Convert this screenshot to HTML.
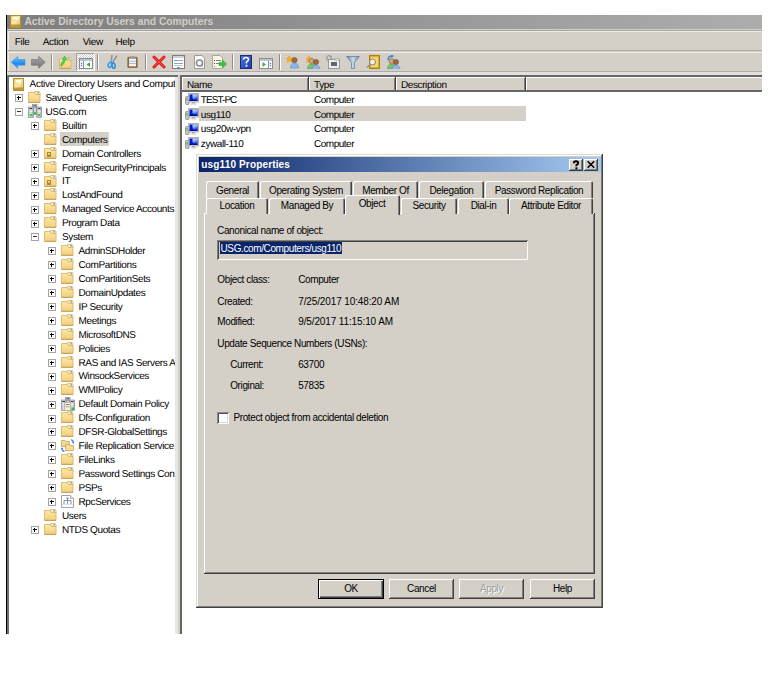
<!DOCTYPE html>
<html><head><meta charset="utf-8"><style>
html,body{margin:0;padding:0;}
body{width:771px;height:689px;position:relative;overflow:hidden;background:#fff;font-family:"Liberation Sans", sans-serif;}
</style></head><body>
<div style="position:absolute;left:6px;top:15px;width:1px;height:619px;background:#000"></div>
<div style="position:absolute;left:7px;top:15px;width:755px;height:14px;background:linear-gradient(to right,#7e7e7e,#adadad)"></div>
<svg style="position:absolute;left:10px;top:15px" width="11" height="13" viewBox="0 0 11 13"><defs><linearGradient id="ai" x1="0" y1="0" x2="1" y2="1"><stop offset="0" stop-color="#e8c860"/><stop offset="0.5" stop-color="#f8e8a8"/><stop offset="1" stop-color="#d8b050"/></linearGradient></defs><rect x="0.5" y="0.5" width="10" height="12" fill="url(#ai)" stroke="#b89030"/><rect x="2.5" y="2" width="5.5" height="2.5" fill="#fffce8"/><rect x="1" y="9.5" width="9" height="2.5" fill="#c09838"/></svg>
<div style="position:absolute;left:24.4px;top:16.68px;font-size:10.3px;line-height:10.3px;letter-spacing:0px;color:#d2cec6;font-weight:bold;white-space:nowrap;">Active Directory Users and Computers</div>
<div style="position:absolute;left:7px;top:29px;width:755px;height:605px;background:#d4d0c8"></div>
<div style="position:absolute;left:7px;top:30px;width:755px;height:1px;background:#a8a6a2"></div>
<div style="position:absolute;left:8px;top:31px;width:754px;height:1px;background:#eeece8"></div>
<div style="position:absolute;left:8px;top:31px;width:1px;height:19px;background:#eeece8"></div>
<div style="position:absolute;left:8px;top:50px;width:754px;height:1px;background:#aeaaa5"></div>
<div style="position:absolute;left:14.8px;top:37.73px;font-size:10px;line-height:10px;letter-spacing:-0.35px;color:#000;font-weight:normal;white-space:nowrap;text-rendering:geometricPrecision">File</div>
<div style="position:absolute;left:42.8px;top:37.73px;font-size:10px;line-height:10px;letter-spacing:-0.35px;color:#000;font-weight:normal;white-space:nowrap;text-rendering:geometricPrecision">Action</div>
<div style="position:absolute;left:82.7px;top:37.73px;font-size:10px;line-height:10px;letter-spacing:-0.35px;color:#000;font-weight:normal;white-space:nowrap;text-rendering:geometricPrecision">View</div>
<div style="position:absolute;left:115.5px;top:37.73px;font-size:10px;line-height:10px;letter-spacing:-0.35px;color:#000;font-weight:normal;white-space:nowrap;text-rendering:geometricPrecision">Help</div>
<div style="position:absolute;left:8px;top:52px;width:754px;height:1px;background:#eeece8"></div>
<div style="position:absolute;left:8px;top:52px;width:1px;height:19px;background:#eeece8"></div>
<div style="position:absolute;left:8px;top:71px;width:754px;height:1px;background:#aeaaa5"></div>
<div style="position:absolute;left:7px;top:72px;width:755px;height:3px;background:#e2e0dc"></div>
<div style="position:absolute;left:7px;top:75px;width:171px;height:559px;background:#6e6e6e"></div>
<div style="position:absolute;left:9px;top:77px;width:166px;height:557px;background:#fff"></div>
<div style="position:absolute;left:175px;top:77px;width:3px;height:557px;background:#e8e6e3"></div>
<div style="position:absolute;left:180px;top:75px;width:582px;height:559px;background:#666"></div>
<div style="position:absolute;left:182px;top:77px;width:580px;height:557px;background:#fff"></div>
<div style="position:absolute;left:182px;top:77px;width:127px;height:14px;background:#d4d0c8"></div>
<div style="position:absolute;left:182px;top:77px;width:127px;height:1px;background:#fff"></div>
<div style="position:absolute;left:182px;top:77px;width:1px;height:14px;background:#fff"></div>
<div style="position:absolute;left:307px;top:78px;width:1px;height:12px;background:#808080"></div>
<div style="position:absolute;left:308px;top:77px;width:1px;height:14px;background:#404040"></div>
<div style="position:absolute;left:182px;top:90px;width:127px;height:2px;background:#666"></div>
<div style="position:absolute;left:187px;top:81.13px;font-size:10px;line-height:10px;letter-spacing:-0.4px;color:#000;font-weight:normal;white-space:nowrap;text-rendering:geometricPrecision">Name</div>
<div style="position:absolute;left:309px;top:77px;width:87px;height:14px;background:#d4d0c8"></div>
<div style="position:absolute;left:309px;top:77px;width:87px;height:1px;background:#fff"></div>
<div style="position:absolute;left:309px;top:77px;width:1px;height:14px;background:#fff"></div>
<div style="position:absolute;left:394px;top:78px;width:1px;height:12px;background:#808080"></div>
<div style="position:absolute;left:395px;top:77px;width:1px;height:14px;background:#404040"></div>
<div style="position:absolute;left:309px;top:90px;width:87px;height:2px;background:#666"></div>
<div style="position:absolute;left:314px;top:81.13px;font-size:10px;line-height:10px;letter-spacing:-0.4px;color:#000;font-weight:normal;white-space:nowrap;text-rendering:geometricPrecision">Type</div>
<div style="position:absolute;left:396px;top:77px;width:130px;height:14px;background:#d4d0c8"></div>
<div style="position:absolute;left:396px;top:77px;width:130px;height:1px;background:#fff"></div>
<div style="position:absolute;left:396px;top:77px;width:1px;height:14px;background:#fff"></div>
<div style="position:absolute;left:524px;top:78px;width:1px;height:12px;background:#808080"></div>
<div style="position:absolute;left:525px;top:77px;width:1px;height:14px;background:#404040"></div>
<div style="position:absolute;left:396px;top:90px;width:130px;height:2px;background:#666"></div>
<div style="position:absolute;left:401px;top:81.13px;font-size:10px;line-height:10px;letter-spacing:-0.4px;color:#000;font-weight:normal;white-space:nowrap;text-rendering:geometricPrecision">Description</div>
<div style="position:absolute;left:526px;top:77px;width:236px;height:14px;background:#d4d0c8"></div>
<div style="position:absolute;left:526px;top:77px;width:236px;height:1px;background:#fff"></div>
<div style="position:absolute;left:526px;top:77px;width:1px;height:14px;background:#fff"></div>
<div style="position:absolute;left:526px;top:90px;width:236px;height:2px;background:#666"></div>
<div style="position:absolute;left:9px;top:77px;width:166px;height:557px;overflow:hidden">
<svg style="position:absolute;left:4px;top:1px" width="11" height="13" viewBox="0 0 11 13"><defs><linearGradient id="ri" x1="0" y1="0" x2="1" y2="1"><stop offset="0" stop-color="#e8c860"/><stop offset="0.5" stop-color="#f8e8a8"/><stop offset="1" stop-color="#d8b050"/></linearGradient></defs><rect x="0.5" y="0.5" width="10" height="12" fill="url(#ri)" stroke="#b89030"/><rect x="2.5" y="2" width="5.5" height="2.5" fill="#fffce8"/><rect x="1" y="9.5" width="9" height="2.5" fill="#c09838"/></svg>
<div style="position:absolute;left:20.6px;top:2.94px;font-size:10px;line-height:10px;letter-spacing:-0.31px;color:#000;font-weight:normal;white-space:nowrap;text-rendering:geometricPrecision">Active Directory Users and Comput</div>
<svg style="position:absolute;left:6px;top:17px" width="8" height="8" viewBox="0 0 8 8"><rect x="0.5" y="0.5" width="7" height="7" fill="#fff" stroke="#a4a4a4"/><rect x="2" y="3" width="4" height="1" fill="#333"/><rect x="3" y="2" width="1" height="4" fill="#000"/><rect x="2" y="3" width="4" height="1" fill="#000"/></svg>
<svg style="position:absolute;left:19px;top:14px" width="13" height="13" viewBox="0 0 13 13"><defs><linearGradient id="fg" x1="0" y1="0" x2="0" y2="1"><stop offset="0" stop-color="#fde9a4"/><stop offset="1" stop-color="#f1cd7e"/></linearGradient></defs><path d="M6.5 0.5 H11.3 L12 1.2 V4 H6.5 Z" fill="#fbefcc" stroke="#d8b46a" stroke-width="0.8"/><rect x="9.2" y="1.2" width="1.8" height="1.3" fill="#6aa0d0"/><path d="M0.5 1.5 H6.3 Q6.8 3.5 8 3.5 H12 V11.5 H0.5 Z" fill="url(#fg)" stroke="#dcb668" stroke-width="0.9"/><rect x="0.5" y="10.8" width="11.5" height="0.9" fill="#c39a4a"/></svg>
<div style="position:absolute;left:36.5px;top:16.87px;font-size:10px;line-height:10px;letter-spacing:-0.38px;color:#000;font-weight:normal;white-space:nowrap;text-rendering:geometricPrecision">Saved Queries</div>
<svg style="position:absolute;left:6px;top:31px" width="8" height="8" viewBox="0 0 8 8"><rect x="0.5" y="0.5" width="7" height="7" fill="#fff" stroke="#a4a4a4"/><rect x="2" y="3" width="4" height="1" fill="#333"/></svg>
<svg style="position:absolute;left:19px;top:27px" width="14" height="14" viewBox="0 0 14 14"><defs><linearGradient id="sv" x1="0" y1="0" x2="1" y2="0"><stop offset="0" stop-color="#a8b0b8"/><stop offset="0.5" stop-color="#e4e8ec"/><stop offset="1" stop-color="#9aa2aa"/></linearGradient></defs><rect x="4.5" y="0.5" width="4.5" height="3.5" fill="url(#sv)" stroke="#8a9098" stroke-width="0.7"/><rect x="5.5" y="1.3" width="2.5" height="1" fill="#303840"/><rect x="5" y="3.5" width="4" height="7" fill="url(#sv)" stroke="#8a9098" stroke-width="0.7"/><rect x="0.5" y="3" width="4.8" height="10.5" fill="url(#sv)" stroke="#8a9098" stroke-width="0.7"/><rect x="8.7" y="3" width="4.8" height="10.5" fill="url(#sv)" stroke="#8a9098" stroke-width="0.7"/><rect x="1.5" y="4" width="2.5" height="1" fill="#303840"/><rect x="10" y="4" width="2.5" height="1" fill="#303840"/><rect x="1.3" y="7" width="3.2" height="0.8" fill="#f4f6f8"/><rect x="9.5" y="7" width="3.2" height="0.8" fill="#f4f6f8"/><rect x="2" y="10" width="2.2" height="2.2" fill="#30d030"/><rect x="10" y="10" width="2.2" height="2.2" fill="#30d030"/><rect x="6" y="8" width="2.2" height="2.2" fill="#30d030"/></svg>
<div style="position:absolute;left:36.5px;top:30.80px;font-size:10px;line-height:10px;letter-spacing:-0.38px;color:#000;font-weight:normal;white-space:nowrap;text-rendering:geometricPrecision">USG.com</div>
<svg style="position:absolute;left:22px;top:45px" width="8" height="8" viewBox="0 0 8 8"><rect x="0.5" y="0.5" width="7" height="7" fill="#fff" stroke="#a4a4a4"/><rect x="2" y="3" width="4" height="1" fill="#333"/><rect x="3" y="2" width="1" height="4" fill="#000"/><rect x="2" y="3" width="4" height="1" fill="#000"/></svg>
<svg style="position:absolute;left:35px;top:42px" width="13" height="13" viewBox="0 0 13 13"><defs><linearGradient id="fg" x1="0" y1="0" x2="0" y2="1"><stop offset="0" stop-color="#fde9a4"/><stop offset="1" stop-color="#f1cd7e"/></linearGradient></defs><path d="M6.5 0.5 H11.3 L12 1.2 V4 H6.5 Z" fill="#fbefcc" stroke="#d8b46a" stroke-width="0.8"/><rect x="9.2" y="1.2" width="1.8" height="1.3" fill="#6aa0d0"/><path d="M0.5 1.5 H6.3 Q6.8 3.5 8 3.5 H12 V11.5 H0.5 Z" fill="url(#fg)" stroke="#dcb668" stroke-width="0.9"/><rect x="0.5" y="10.8" width="11.5" height="0.9" fill="#c39a4a"/></svg>
<div style="position:absolute;left:53.0px;top:44.72px;font-size:10px;line-height:10px;letter-spacing:-0.38px;color:#000;font-weight:normal;white-space:nowrap;text-rendering:geometricPrecision">Builtin</div>
<div style="position:absolute;left:51px;top:55px;width:49px;height:14px;background:#d4d0c8"></div>
<svg style="position:absolute;left:35px;top:56px" width="13" height="13" viewBox="0 0 13 13"><defs><linearGradient id="fg" x1="0" y1="0" x2="0" y2="1"><stop offset="0" stop-color="#fde9a4"/><stop offset="1" stop-color="#f1cd7e"/></linearGradient></defs><path d="M6.5 0.5 H11.3 L12 1.2 V4 H6.5 Z" fill="#fbefcc" stroke="#d8b46a" stroke-width="0.8"/><rect x="9.2" y="1.2" width="1.8" height="1.3" fill="#6aa0d0"/><path d="M0.5 1.5 H6.3 Q6.8 3.5 8 3.5 H12 V11.5 H0.5 Z" fill="url(#fg)" stroke="#dcb668" stroke-width="0.9"/><rect x="0.5" y="10.8" width="11.5" height="0.9" fill="#c39a4a"/></svg>
<div style="position:absolute;left:53.0px;top:58.66px;font-size:10px;line-height:10px;letter-spacing:-0.38px;color:#000;font-weight:normal;white-space:nowrap;text-rendering:geometricPrecision">Computers</div>
<svg style="position:absolute;left:22px;top:73px" width="8" height="8" viewBox="0 0 8 8"><rect x="0.5" y="0.5" width="7" height="7" fill="#fff" stroke="#a4a4a4"/><rect x="2" y="3" width="4" height="1" fill="#333"/><rect x="3" y="2" width="1" height="4" fill="#000"/><rect x="2" y="3" width="4" height="1" fill="#000"/></svg>
<svg style="position:absolute;left:35px;top:70px" width="13" height="13" viewBox="0 0 13 13"><defs><linearGradient id="fg" x1="0" y1="0" x2="0" y2="1"><stop offset="0" stop-color="#fde9a4"/><stop offset="1" stop-color="#f1cd7e"/></linearGradient></defs><path d="M6.5 0.5 H11.3 L12 1.2 V4 H6.5 Z" fill="#fbefcc" stroke="#d8b46a" stroke-width="0.8"/><rect x="9.2" y="1.2" width="1.8" height="1.3" fill="#6aa0d0"/><path d="M0.5 1.5 H6.3 Q6.8 3.5 8 3.5 H12 V11.5 H0.5 Z" fill="url(#fg)" stroke="#dcb668" stroke-width="0.9"/><rect x="0.5" y="10.8" width="11.5" height="0.9" fill="#c39a4a"/><rect x="3" y="5" width="4" height="5" fill="#b08a30"/><rect x="4" y="6" width="2" height="1.5" fill="#f0e0a0"/></svg>
<div style="position:absolute;left:53.0px;top:72.59px;font-size:10px;line-height:10px;letter-spacing:-0.38px;color:#000;font-weight:normal;white-space:nowrap;text-rendering:geometricPrecision">Domain Controllers</div>
<svg style="position:absolute;left:22px;top:87px" width="8" height="8" viewBox="0 0 8 8"><rect x="0.5" y="0.5" width="7" height="7" fill="#fff" stroke="#a4a4a4"/><rect x="2" y="3" width="4" height="1" fill="#333"/><rect x="3" y="2" width="1" height="4" fill="#000"/><rect x="2" y="3" width="4" height="1" fill="#000"/></svg>
<svg style="position:absolute;left:35px;top:84px" width="13" height="13" viewBox="0 0 13 13"><defs><linearGradient id="fg" x1="0" y1="0" x2="0" y2="1"><stop offset="0" stop-color="#fde9a4"/><stop offset="1" stop-color="#f1cd7e"/></linearGradient></defs><path d="M6.5 0.5 H11.3 L12 1.2 V4 H6.5 Z" fill="#fbefcc" stroke="#d8b46a" stroke-width="0.8"/><rect x="9.2" y="1.2" width="1.8" height="1.3" fill="#6aa0d0"/><path d="M0.5 1.5 H6.3 Q6.8 3.5 8 3.5 H12 V11.5 H0.5 Z" fill="url(#fg)" stroke="#dcb668" stroke-width="0.9"/><rect x="0.5" y="10.8" width="11.5" height="0.9" fill="#c39a4a"/></svg>
<div style="position:absolute;left:53.0px;top:86.52px;font-size:10px;line-height:10px;letter-spacing:-0.38px;color:#000;font-weight:normal;white-space:nowrap;text-rendering:geometricPrecision">ForeignSecurityPrincipals</div>
<svg style="position:absolute;left:22px;top:101px" width="8" height="8" viewBox="0 0 8 8"><rect x="0.5" y="0.5" width="7" height="7" fill="#fff" stroke="#a4a4a4"/><rect x="2" y="3" width="4" height="1" fill="#333"/><rect x="3" y="2" width="1" height="4" fill="#000"/><rect x="2" y="3" width="4" height="1" fill="#000"/></svg>
<svg style="position:absolute;left:35px;top:98px" width="13" height="13" viewBox="0 0 13 13"><defs><linearGradient id="fg" x1="0" y1="0" x2="0" y2="1"><stop offset="0" stop-color="#fde9a4"/><stop offset="1" stop-color="#f1cd7e"/></linearGradient></defs><path d="M6.5 0.5 H11.3 L12 1.2 V4 H6.5 Z" fill="#fbefcc" stroke="#d8b46a" stroke-width="0.8"/><rect x="9.2" y="1.2" width="1.8" height="1.3" fill="#6aa0d0"/><path d="M0.5 1.5 H6.3 Q6.8 3.5 8 3.5 H12 V11.5 H0.5 Z" fill="url(#fg)" stroke="#dcb668" stroke-width="0.9"/><rect x="0.5" y="10.8" width="11.5" height="0.9" fill="#c39a4a"/><rect x="3" y="5" width="4" height="5" fill="#b08a30"/><rect x="4" y="6" width="2" height="1.5" fill="#f0e0a0"/></svg>
<div style="position:absolute;left:53.0px;top:100.44px;font-size:10px;line-height:10px;letter-spacing:-0.38px;color:#000;font-weight:normal;white-space:nowrap;text-rendering:geometricPrecision">IT</div>
<svg style="position:absolute;left:22px;top:115px" width="8" height="8" viewBox="0 0 8 8"><rect x="0.5" y="0.5" width="7" height="7" fill="#fff" stroke="#a4a4a4"/><rect x="2" y="3" width="4" height="1" fill="#333"/><rect x="3" y="2" width="1" height="4" fill="#000"/><rect x="2" y="3" width="4" height="1" fill="#000"/></svg>
<svg style="position:absolute;left:35px;top:111px" width="13" height="13" viewBox="0 0 13 13"><defs><linearGradient id="fg" x1="0" y1="0" x2="0" y2="1"><stop offset="0" stop-color="#fde9a4"/><stop offset="1" stop-color="#f1cd7e"/></linearGradient></defs><path d="M6.5 0.5 H11.3 L12 1.2 V4 H6.5 Z" fill="#fbefcc" stroke="#d8b46a" stroke-width="0.8"/><rect x="9.2" y="1.2" width="1.8" height="1.3" fill="#6aa0d0"/><path d="M0.5 1.5 H6.3 Q6.8 3.5 8 3.5 H12 V11.5 H0.5 Z" fill="url(#fg)" stroke="#dcb668" stroke-width="0.9"/><rect x="0.5" y="10.8" width="11.5" height="0.9" fill="#c39a4a"/></svg>
<div style="position:absolute;left:53.0px;top:114.38px;font-size:10px;line-height:10px;letter-spacing:-0.38px;color:#000;font-weight:normal;white-space:nowrap;text-rendering:geometricPrecision">LostAndFound</div>
<svg style="position:absolute;left:22px;top:129px" width="8" height="8" viewBox="0 0 8 8"><rect x="0.5" y="0.5" width="7" height="7" fill="#fff" stroke="#a4a4a4"/><rect x="2" y="3" width="4" height="1" fill="#333"/><rect x="3" y="2" width="1" height="4" fill="#000"/><rect x="2" y="3" width="4" height="1" fill="#000"/></svg>
<svg style="position:absolute;left:35px;top:125px" width="13" height="13" viewBox="0 0 13 13"><defs><linearGradient id="fg" x1="0" y1="0" x2="0" y2="1"><stop offset="0" stop-color="#fde9a4"/><stop offset="1" stop-color="#f1cd7e"/></linearGradient></defs><path d="M6.5 0.5 H11.3 L12 1.2 V4 H6.5 Z" fill="#fbefcc" stroke="#d8b46a" stroke-width="0.8"/><rect x="9.2" y="1.2" width="1.8" height="1.3" fill="#6aa0d0"/><path d="M0.5 1.5 H6.3 Q6.8 3.5 8 3.5 H12 V11.5 H0.5 Z" fill="url(#fg)" stroke="#dcb668" stroke-width="0.9"/><rect x="0.5" y="10.8" width="11.5" height="0.9" fill="#c39a4a"/></svg>
<div style="position:absolute;left:53.0px;top:128.31px;font-size:10px;line-height:10px;letter-spacing:-0.38px;color:#000;font-weight:normal;white-space:nowrap;text-rendering:geometricPrecision">Managed Service Accounts</div>
<svg style="position:absolute;left:22px;top:143px" width="8" height="8" viewBox="0 0 8 8"><rect x="0.5" y="0.5" width="7" height="7" fill="#fff" stroke="#a4a4a4"/><rect x="2" y="3" width="4" height="1" fill="#333"/><rect x="3" y="2" width="1" height="4" fill="#000"/><rect x="2" y="3" width="4" height="1" fill="#000"/></svg>
<svg style="position:absolute;left:35px;top:139px" width="13" height="13" viewBox="0 0 13 13"><defs><linearGradient id="fg" x1="0" y1="0" x2="0" y2="1"><stop offset="0" stop-color="#fde9a4"/><stop offset="1" stop-color="#f1cd7e"/></linearGradient></defs><path d="M6.5 0.5 H11.3 L12 1.2 V4 H6.5 Z" fill="#fbefcc" stroke="#d8b46a" stroke-width="0.8"/><rect x="9.2" y="1.2" width="1.8" height="1.3" fill="#6aa0d0"/><path d="M0.5 1.5 H6.3 Q6.8 3.5 8 3.5 H12 V11.5 H0.5 Z" fill="url(#fg)" stroke="#dcb668" stroke-width="0.9"/><rect x="0.5" y="10.8" width="11.5" height="0.9" fill="#c39a4a"/></svg>
<div style="position:absolute;left:53.0px;top:142.24px;font-size:10px;line-height:10px;letter-spacing:-0.38px;color:#000;font-weight:normal;white-space:nowrap;text-rendering:geometricPrecision">Program Data</div>
<svg style="position:absolute;left:22px;top:156px" width="8" height="8" viewBox="0 0 8 8"><rect x="0.5" y="0.5" width="7" height="7" fill="#fff" stroke="#a4a4a4"/><rect x="2" y="3" width="4" height="1" fill="#333"/></svg>
<svg style="position:absolute;left:35px;top:153px" width="13" height="13" viewBox="0 0 13 13"><defs><linearGradient id="fg" x1="0" y1="0" x2="0" y2="1"><stop offset="0" stop-color="#fde9a4"/><stop offset="1" stop-color="#f1cd7e"/></linearGradient></defs><path d="M6.5 0.5 H11.3 L12 1.2 V4 H6.5 Z" fill="#fbefcc" stroke="#d8b46a" stroke-width="0.8"/><rect x="9.2" y="1.2" width="1.8" height="1.3" fill="#6aa0d0"/><path d="M0.5 1.5 H6.3 Q6.8 3.5 8 3.5 H12 V11.5 H0.5 Z" fill="url(#fg)" stroke="#dcb668" stroke-width="0.9"/><rect x="0.5" y="10.8" width="11.5" height="0.9" fill="#c39a4a"/></svg>
<div style="position:absolute;left:53.0px;top:156.16px;font-size:10px;line-height:10px;letter-spacing:-0.38px;color:#000;font-weight:normal;white-space:nowrap;text-rendering:geometricPrecision">System</div>
<svg style="position:absolute;left:39px;top:170px" width="8" height="8" viewBox="0 0 8 8"><rect x="0.5" y="0.5" width="7" height="7" fill="#fff" stroke="#a4a4a4"/><rect x="2" y="3" width="4" height="1" fill="#333"/><rect x="3" y="2" width="1" height="4" fill="#000"/><rect x="2" y="3" width="4" height="1" fill="#000"/></svg>
<svg style="position:absolute;left:52px;top:167px" width="13" height="13" viewBox="0 0 13 13"><defs><linearGradient id="fg" x1="0" y1="0" x2="0" y2="1"><stop offset="0" stop-color="#fde9a4"/><stop offset="1" stop-color="#f1cd7e"/></linearGradient></defs><path d="M6.5 0.5 H11.3 L12 1.2 V4 H6.5 Z" fill="#fbefcc" stroke="#d8b46a" stroke-width="0.8"/><rect x="9.2" y="1.2" width="1.8" height="1.3" fill="#6aa0d0"/><path d="M0.5 1.5 H6.3 Q6.8 3.5 8 3.5 H12 V11.5 H0.5 Z" fill="url(#fg)" stroke="#dcb668" stroke-width="0.9"/><rect x="0.5" y="10.8" width="11.5" height="0.9" fill="#c39a4a"/></svg>
<div style="position:absolute;left:69.5px;top:170.09px;font-size:10px;line-height:10px;letter-spacing:-0.38px;color:#000;font-weight:normal;white-space:nowrap;text-rendering:geometricPrecision">AdminSDHolder</div>
<svg style="position:absolute;left:39px;top:184px" width="8" height="8" viewBox="0 0 8 8"><rect x="0.5" y="0.5" width="7" height="7" fill="#fff" stroke="#a4a4a4"/><rect x="2" y="3" width="4" height="1" fill="#333"/><rect x="3" y="2" width="1" height="4" fill="#000"/><rect x="2" y="3" width="4" height="1" fill="#000"/></svg>
<svg style="position:absolute;left:52px;top:181px" width="13" height="13" viewBox="0 0 13 13"><defs><linearGradient id="fg" x1="0" y1="0" x2="0" y2="1"><stop offset="0" stop-color="#fde9a4"/><stop offset="1" stop-color="#f1cd7e"/></linearGradient></defs><path d="M6.5 0.5 H11.3 L12 1.2 V4 H6.5 Z" fill="#fbefcc" stroke="#d8b46a" stroke-width="0.8"/><rect x="9.2" y="1.2" width="1.8" height="1.3" fill="#6aa0d0"/><path d="M0.5 1.5 H6.3 Q6.8 3.5 8 3.5 H12 V11.5 H0.5 Z" fill="url(#fg)" stroke="#dcb668" stroke-width="0.9"/><rect x="0.5" y="10.8" width="11.5" height="0.9" fill="#c39a4a"/></svg>
<div style="position:absolute;left:69.5px;top:184.03px;font-size:10px;line-height:10px;letter-spacing:-0.38px;color:#000;font-weight:normal;white-space:nowrap;text-rendering:geometricPrecision">ComPartitions</div>
<svg style="position:absolute;left:39px;top:198px" width="8" height="8" viewBox="0 0 8 8"><rect x="0.5" y="0.5" width="7" height="7" fill="#fff" stroke="#a4a4a4"/><rect x="2" y="3" width="4" height="1" fill="#333"/><rect x="3" y="2" width="1" height="4" fill="#000"/><rect x="2" y="3" width="4" height="1" fill="#000"/></svg>
<svg style="position:absolute;left:52px;top:195px" width="13" height="13" viewBox="0 0 13 13"><defs><linearGradient id="fg" x1="0" y1="0" x2="0" y2="1"><stop offset="0" stop-color="#fde9a4"/><stop offset="1" stop-color="#f1cd7e"/></linearGradient></defs><path d="M6.5 0.5 H11.3 L12 1.2 V4 H6.5 Z" fill="#fbefcc" stroke="#d8b46a" stroke-width="0.8"/><rect x="9.2" y="1.2" width="1.8" height="1.3" fill="#6aa0d0"/><path d="M0.5 1.5 H6.3 Q6.8 3.5 8 3.5 H12 V11.5 H0.5 Z" fill="url(#fg)" stroke="#dcb668" stroke-width="0.9"/><rect x="0.5" y="10.8" width="11.5" height="0.9" fill="#c39a4a"/></svg>
<div style="position:absolute;left:69.5px;top:197.95px;font-size:10px;line-height:10px;letter-spacing:-0.38px;color:#000;font-weight:normal;white-space:nowrap;text-rendering:geometricPrecision">ComPartitionSets</div>
<svg style="position:absolute;left:39px;top:212px" width="8" height="8" viewBox="0 0 8 8"><rect x="0.5" y="0.5" width="7" height="7" fill="#fff" stroke="#a4a4a4"/><rect x="2" y="3" width="4" height="1" fill="#333"/><rect x="3" y="2" width="1" height="4" fill="#000"/><rect x="2" y="3" width="4" height="1" fill="#000"/></svg>
<svg style="position:absolute;left:52px;top:209px" width="13" height="13" viewBox="0 0 13 13"><defs><linearGradient id="fg" x1="0" y1="0" x2="0" y2="1"><stop offset="0" stop-color="#fde9a4"/><stop offset="1" stop-color="#f1cd7e"/></linearGradient></defs><path d="M6.5 0.5 H11.3 L12 1.2 V4 H6.5 Z" fill="#fbefcc" stroke="#d8b46a" stroke-width="0.8"/><rect x="9.2" y="1.2" width="1.8" height="1.3" fill="#6aa0d0"/><path d="M0.5 1.5 H6.3 Q6.8 3.5 8 3.5 H12 V11.5 H0.5 Z" fill="url(#fg)" stroke="#dcb668" stroke-width="0.9"/><rect x="0.5" y="10.8" width="11.5" height="0.9" fill="#c39a4a"/></svg>
<div style="position:absolute;left:69.5px;top:211.89px;font-size:10px;line-height:10px;letter-spacing:-0.38px;color:#000;font-weight:normal;white-space:nowrap;text-rendering:geometricPrecision">DomainUpdates</div>
<svg style="position:absolute;left:39px;top:226px" width="8" height="8" viewBox="0 0 8 8"><rect x="0.5" y="0.5" width="7" height="7" fill="#fff" stroke="#a4a4a4"/><rect x="2" y="3" width="4" height="1" fill="#333"/><rect x="3" y="2" width="1" height="4" fill="#000"/><rect x="2" y="3" width="4" height="1" fill="#000"/></svg>
<svg style="position:absolute;left:52px;top:223px" width="13" height="13" viewBox="0 0 13 13"><defs><linearGradient id="fg" x1="0" y1="0" x2="0" y2="1"><stop offset="0" stop-color="#fde9a4"/><stop offset="1" stop-color="#f1cd7e"/></linearGradient></defs><path d="M6.5 0.5 H11.3 L12 1.2 V4 H6.5 Z" fill="#fbefcc" stroke="#d8b46a" stroke-width="0.8"/><rect x="9.2" y="1.2" width="1.8" height="1.3" fill="#6aa0d0"/><path d="M0.5 1.5 H6.3 Q6.8 3.5 8 3.5 H12 V11.5 H0.5 Z" fill="url(#fg)" stroke="#dcb668" stroke-width="0.9"/><rect x="0.5" y="10.8" width="11.5" height="0.9" fill="#c39a4a"/></svg>
<div style="position:absolute;left:69.5px;top:225.81px;font-size:10px;line-height:10px;letter-spacing:-0.38px;color:#000;font-weight:normal;white-space:nowrap;text-rendering:geometricPrecision">IP Security</div>
<svg style="position:absolute;left:39px;top:240px" width="8" height="8" viewBox="0 0 8 8"><rect x="0.5" y="0.5" width="7" height="7" fill="#fff" stroke="#a4a4a4"/><rect x="2" y="3" width="4" height="1" fill="#333"/><rect x="3" y="2" width="1" height="4" fill="#000"/><rect x="2" y="3" width="4" height="1" fill="#000"/></svg>
<svg style="position:absolute;left:52px;top:237px" width="13" height="13" viewBox="0 0 13 13"><defs><linearGradient id="fg" x1="0" y1="0" x2="0" y2="1"><stop offset="0" stop-color="#fde9a4"/><stop offset="1" stop-color="#f1cd7e"/></linearGradient></defs><path d="M6.5 0.5 H11.3 L12 1.2 V4 H6.5 Z" fill="#fbefcc" stroke="#d8b46a" stroke-width="0.8"/><rect x="9.2" y="1.2" width="1.8" height="1.3" fill="#6aa0d0"/><path d="M0.5 1.5 H6.3 Q6.8 3.5 8 3.5 H12 V11.5 H0.5 Z" fill="url(#fg)" stroke="#dcb668" stroke-width="0.9"/><rect x="0.5" y="10.8" width="11.5" height="0.9" fill="#c39a4a"/></svg>
<div style="position:absolute;left:69.5px;top:239.75px;font-size:10px;line-height:10px;letter-spacing:-0.38px;color:#000;font-weight:normal;white-space:nowrap;text-rendering:geometricPrecision">Meetings</div>
<svg style="position:absolute;left:39px;top:254px" width="8" height="8" viewBox="0 0 8 8"><rect x="0.5" y="0.5" width="7" height="7" fill="#fff" stroke="#a4a4a4"/><rect x="2" y="3" width="4" height="1" fill="#333"/><rect x="3" y="2" width="1" height="4" fill="#000"/><rect x="2" y="3" width="4" height="1" fill="#000"/></svg>
<svg style="position:absolute;left:52px;top:251px" width="13" height="13" viewBox="0 0 13 13"><defs><linearGradient id="fg" x1="0" y1="0" x2="0" y2="1"><stop offset="0" stop-color="#fde9a4"/><stop offset="1" stop-color="#f1cd7e"/></linearGradient></defs><path d="M6.5 0.5 H11.3 L12 1.2 V4 H6.5 Z" fill="#fbefcc" stroke="#d8b46a" stroke-width="0.8"/><rect x="9.2" y="1.2" width="1.8" height="1.3" fill="#6aa0d0"/><path d="M0.5 1.5 H6.3 Q6.8 3.5 8 3.5 H12 V11.5 H0.5 Z" fill="url(#fg)" stroke="#dcb668" stroke-width="0.9"/><rect x="0.5" y="10.8" width="11.5" height="0.9" fill="#c39a4a"/></svg>
<div style="position:absolute;left:69.5px;top:253.67px;font-size:10px;line-height:10px;letter-spacing:-0.38px;color:#000;font-weight:normal;white-space:nowrap;text-rendering:geometricPrecision">MicrosoftDNS</div>
<svg style="position:absolute;left:39px;top:268px" width="8" height="8" viewBox="0 0 8 8"><rect x="0.5" y="0.5" width="7" height="7" fill="#fff" stroke="#a4a4a4"/><rect x="2" y="3" width="4" height="1" fill="#333"/><rect x="3" y="2" width="1" height="4" fill="#000"/><rect x="2" y="3" width="4" height="1" fill="#000"/></svg>
<svg style="position:absolute;left:52px;top:265px" width="13" height="13" viewBox="0 0 13 13"><defs><linearGradient id="fg" x1="0" y1="0" x2="0" y2="1"><stop offset="0" stop-color="#fde9a4"/><stop offset="1" stop-color="#f1cd7e"/></linearGradient></defs><path d="M6.5 0.5 H11.3 L12 1.2 V4 H6.5 Z" fill="#fbefcc" stroke="#d8b46a" stroke-width="0.8"/><rect x="9.2" y="1.2" width="1.8" height="1.3" fill="#6aa0d0"/><path d="M0.5 1.5 H6.3 Q6.8 3.5 8 3.5 H12 V11.5 H0.5 Z" fill="url(#fg)" stroke="#dcb668" stroke-width="0.9"/><rect x="0.5" y="10.8" width="11.5" height="0.9" fill="#c39a4a"/></svg>
<div style="position:absolute;left:69.5px;top:267.61px;font-size:10px;line-height:10px;letter-spacing:-0.38px;color:#000;font-weight:normal;white-space:nowrap;text-rendering:geometricPrecision">Policies</div>
<svg style="position:absolute;left:39px;top:282px" width="8" height="8" viewBox="0 0 8 8"><rect x="0.5" y="0.5" width="7" height="7" fill="#fff" stroke="#a4a4a4"/><rect x="2" y="3" width="4" height="1" fill="#333"/><rect x="3" y="2" width="1" height="4" fill="#000"/><rect x="2" y="3" width="4" height="1" fill="#000"/></svg>
<svg style="position:absolute;left:52px;top:279px" width="13" height="13" viewBox="0 0 13 13"><defs><linearGradient id="fg" x1="0" y1="0" x2="0" y2="1"><stop offset="0" stop-color="#fde9a4"/><stop offset="1" stop-color="#f1cd7e"/></linearGradient></defs><path d="M6.5 0.5 H11.3 L12 1.2 V4 H6.5 Z" fill="#fbefcc" stroke="#d8b46a" stroke-width="0.8"/><rect x="9.2" y="1.2" width="1.8" height="1.3" fill="#6aa0d0"/><path d="M0.5 1.5 H6.3 Q6.8 3.5 8 3.5 H12 V11.5 H0.5 Z" fill="url(#fg)" stroke="#dcb668" stroke-width="0.9"/><rect x="0.5" y="10.8" width="11.5" height="0.9" fill="#c39a4a"/></svg>
<div style="position:absolute;left:69.5px;top:281.54px;font-size:10px;line-height:10px;letter-spacing:-0.38px;color:#000;font-weight:normal;white-space:nowrap;text-rendering:geometricPrecision">RAS and IAS Servers A</div>
<svg style="position:absolute;left:39px;top:296px" width="8" height="8" viewBox="0 0 8 8"><rect x="0.5" y="0.5" width="7" height="7" fill="#fff" stroke="#a4a4a4"/><rect x="2" y="3" width="4" height="1" fill="#333"/><rect x="3" y="2" width="1" height="4" fill="#000"/><rect x="2" y="3" width="4" height="1" fill="#000"/></svg>
<svg style="position:absolute;left:52px;top:293px" width="13" height="13" viewBox="0 0 13 13"><defs><linearGradient id="fg" x1="0" y1="0" x2="0" y2="1"><stop offset="0" stop-color="#fde9a4"/><stop offset="1" stop-color="#f1cd7e"/></linearGradient></defs><path d="M6.5 0.5 H11.3 L12 1.2 V4 H6.5 Z" fill="#fbefcc" stroke="#d8b46a" stroke-width="0.8"/><rect x="9.2" y="1.2" width="1.8" height="1.3" fill="#6aa0d0"/><path d="M0.5 1.5 H6.3 Q6.8 3.5 8 3.5 H12 V11.5 H0.5 Z" fill="url(#fg)" stroke="#dcb668" stroke-width="0.9"/><rect x="0.5" y="10.8" width="11.5" height="0.9" fill="#c39a4a"/></svg>
<div style="position:absolute;left:69.5px;top:295.46px;font-size:10px;line-height:10px;letter-spacing:-0.38px;color:#000;font-weight:normal;white-space:nowrap;text-rendering:geometricPrecision">WinsockServices</div>
<svg style="position:absolute;left:39px;top:310px" width="8" height="8" viewBox="0 0 8 8"><rect x="0.5" y="0.5" width="7" height="7" fill="#fff" stroke="#a4a4a4"/><rect x="2" y="3" width="4" height="1" fill="#333"/><rect x="3" y="2" width="1" height="4" fill="#000"/><rect x="2" y="3" width="4" height="1" fill="#000"/></svg>
<svg style="position:absolute;left:52px;top:306px" width="13" height="13" viewBox="0 0 13 13"><defs><linearGradient id="fg" x1="0" y1="0" x2="0" y2="1"><stop offset="0" stop-color="#fde9a4"/><stop offset="1" stop-color="#f1cd7e"/></linearGradient></defs><path d="M6.5 0.5 H11.3 L12 1.2 V4 H6.5 Z" fill="#fbefcc" stroke="#d8b46a" stroke-width="0.8"/><rect x="9.2" y="1.2" width="1.8" height="1.3" fill="#6aa0d0"/><path d="M0.5 1.5 H6.3 Q6.8 3.5 8 3.5 H12 V11.5 H0.5 Z" fill="url(#fg)" stroke="#dcb668" stroke-width="0.9"/><rect x="0.5" y="10.8" width="11.5" height="0.9" fill="#c39a4a"/></svg>
<div style="position:absolute;left:69.5px;top:309.40px;font-size:10px;line-height:10px;letter-spacing:-0.38px;color:#000;font-weight:normal;white-space:nowrap;text-rendering:geometricPrecision">WMIPolicy</div>
<svg style="position:absolute;left:39px;top:324px" width="8" height="8" viewBox="0 0 8 8"><rect x="0.5" y="0.5" width="7" height="7" fill="#fff" stroke="#a4a4a4"/><rect x="2" y="3" width="4" height="1" fill="#333"/><rect x="3" y="2" width="1" height="4" fill="#000"/><rect x="2" y="3" width="4" height="1" fill="#000"/></svg>
<svg style="position:absolute;left:52px;top:320px" width="14" height="14" viewBox="0 0 14 14"><defs><linearGradient id="sv" x1="0" y1="0" x2="1" y2="0"><stop offset="0" stop-color="#a8b0b8"/><stop offset="0.5" stop-color="#e4e8ec"/><stop offset="1" stop-color="#9aa2aa"/></linearGradient></defs><rect x="4.5" y="0.5" width="4.5" height="3.5" fill="url(#sv)" stroke="#8a9098" stroke-width="0.7"/><rect x="5.5" y="1.3" width="2.5" height="1" fill="#303840"/><rect x="5" y="3.5" width="4" height="7" fill="url(#sv)" stroke="#8a9098" stroke-width="0.7"/><rect x="0.5" y="3" width="4.8" height="10.5" fill="url(#sv)" stroke="#8a9098" stroke-width="0.7"/><rect x="8.7" y="3" width="4.8" height="10.5" fill="url(#sv)" stroke="#8a9098" stroke-width="0.7"/><rect x="1.5" y="4" width="2.5" height="1" fill="#303840"/><rect x="10" y="4" width="2.5" height="1" fill="#303840"/><rect x="1.3" y="7" width="3.2" height="0.8" fill="#f4f6f8"/><rect x="9.5" y="7" width="3.2" height="0.8" fill="#f4f6f8"/><path d="M3.5 5.5 h6 v7 l-1 1 h-5 z" fill="#f8f0d8" stroke="#b0a890" stroke-width="0.7"/><rect x="4.5" y="7" width="4" height="0.9" fill="#6870a0"/><rect x="4.5" y="9.3" width="4" height="0.9" fill="#a09880"/><rect x="10.5" y="10.5" width="2.5" height="2.5" fill="#30c030"/></svg>
<div style="position:absolute;left:69.5px;top:323.32px;font-size:10px;line-height:10px;letter-spacing:-0.38px;color:#000;font-weight:normal;white-space:nowrap;text-rendering:geometricPrecision">Default Domain Policy</div>
<svg style="position:absolute;left:39px;top:338px" width="8" height="8" viewBox="0 0 8 8"><rect x="0.5" y="0.5" width="7" height="7" fill="#fff" stroke="#a4a4a4"/><rect x="2" y="3" width="4" height="1" fill="#333"/><rect x="3" y="2" width="1" height="4" fill="#000"/><rect x="2" y="3" width="4" height="1" fill="#000"/></svg>
<svg style="position:absolute;left:52px;top:334px" width="13" height="13" viewBox="0 0 13 13"><defs><linearGradient id="fg" x1="0" y1="0" x2="0" y2="1"><stop offset="0" stop-color="#fde9a4"/><stop offset="1" stop-color="#f1cd7e"/></linearGradient></defs><path d="M6.5 0.5 H11.3 L12 1.2 V4 H6.5 Z" fill="#fbefcc" stroke="#d8b46a" stroke-width="0.8"/><rect x="9.2" y="1.2" width="1.8" height="1.3" fill="#6aa0d0"/><path d="M0.5 1.5 H6.3 Q6.8 3.5 8 3.5 H12 V11.5 H0.5 Z" fill="url(#fg)" stroke="#dcb668" stroke-width="0.9"/><rect x="0.5" y="10.8" width="11.5" height="0.9" fill="#c39a4a"/></svg>
<div style="position:absolute;left:69.5px;top:337.26px;font-size:10px;line-height:10px;letter-spacing:-0.38px;color:#000;font-weight:normal;white-space:nowrap;text-rendering:geometricPrecision">Dfs-Configuration</div>
<svg style="position:absolute;left:39px;top:351px" width="8" height="8" viewBox="0 0 8 8"><rect x="0.5" y="0.5" width="7" height="7" fill="#fff" stroke="#a4a4a4"/><rect x="2" y="3" width="4" height="1" fill="#333"/><rect x="3" y="2" width="1" height="4" fill="#000"/><rect x="2" y="3" width="4" height="1" fill="#000"/></svg>
<svg style="position:absolute;left:52px;top:348px" width="13" height="13" viewBox="0 0 13 13"><defs><linearGradient id="fg" x1="0" y1="0" x2="0" y2="1"><stop offset="0" stop-color="#fde9a4"/><stop offset="1" stop-color="#f1cd7e"/></linearGradient></defs><path d="M6.5 0.5 H11.3 L12 1.2 V4 H6.5 Z" fill="#fbefcc" stroke="#d8b46a" stroke-width="0.8"/><rect x="9.2" y="1.2" width="1.8" height="1.3" fill="#6aa0d0"/><path d="M0.5 1.5 H6.3 Q6.8 3.5 8 3.5 H12 V11.5 H0.5 Z" fill="url(#fg)" stroke="#dcb668" stroke-width="0.9"/><rect x="0.5" y="10.8" width="11.5" height="0.9" fill="#c39a4a"/></svg>
<div style="position:absolute;left:69.5px;top:351.19px;font-size:10px;line-height:10px;letter-spacing:-0.38px;color:#000;font-weight:normal;white-space:nowrap;text-rendering:geometricPrecision">DFSR-GlobalSettings</div>
<svg style="position:absolute;left:39px;top:365px" width="8" height="8" viewBox="0 0 8 8"><rect x="0.5" y="0.5" width="7" height="7" fill="#fff" stroke="#a4a4a4"/><rect x="2" y="3" width="4" height="1" fill="#333"/><rect x="3" y="2" width="1" height="4" fill="#000"/><rect x="2" y="3" width="4" height="1" fill="#000"/></svg>
<svg style="position:absolute;left:52px;top:362px" width="13" height="13" viewBox="0 0 13 13"><path d="M0.5 1.5 H4 L5 2.5 H8.5 V7.5 H0.5 Z" fill="#f6d88e" stroke="#c9a253" stroke-width="0.8"/><path d="M4.5 5.5 H8 L9 6.5 H12.5 V11.5 H4.5 Z" fill="#f8dc94" stroke="#c9a253" stroke-width="0.8"/><path d="M10 0.8 Q12.3 1 12.3 3.8" fill="none" stroke="#3a88e0" stroke-width="1.2"/><path d="M10.8 3.2 L12.3 5 L13.5 3.2 Z" fill="#3a88e0"/><path d="M3.5 12.3 Q1 12.2 1 9.5" fill="none" stroke="#3a88e0" stroke-width="1.2"/><path d="M-0.2 10 L1 8.2 L2.4 10 Z" fill="#3a88e0"/></svg>
<div style="position:absolute;left:69.5px;top:365.12px;font-size:10px;line-height:10px;letter-spacing:-0.38px;color:#000;font-weight:normal;white-space:nowrap;text-rendering:geometricPrecision">File Replication Service</div>
<svg style="position:absolute;left:39px;top:379px" width="8" height="8" viewBox="0 0 8 8"><rect x="0.5" y="0.5" width="7" height="7" fill="#fff" stroke="#a4a4a4"/><rect x="2" y="3" width="4" height="1" fill="#333"/><rect x="3" y="2" width="1" height="4" fill="#000"/><rect x="2" y="3" width="4" height="1" fill="#000"/></svg>
<svg style="position:absolute;left:52px;top:376px" width="13" height="13" viewBox="0 0 13 13"><defs><linearGradient id="fg" x1="0" y1="0" x2="0" y2="1"><stop offset="0" stop-color="#fde9a4"/><stop offset="1" stop-color="#f1cd7e"/></linearGradient></defs><path d="M6.5 0.5 H11.3 L12 1.2 V4 H6.5 Z" fill="#fbefcc" stroke="#d8b46a" stroke-width="0.8"/><rect x="9.2" y="1.2" width="1.8" height="1.3" fill="#6aa0d0"/><path d="M0.5 1.5 H6.3 Q6.8 3.5 8 3.5 H12 V11.5 H0.5 Z" fill="url(#fg)" stroke="#dcb668" stroke-width="0.9"/><rect x="0.5" y="10.8" width="11.5" height="0.9" fill="#c39a4a"/></svg>
<div style="position:absolute;left:69.5px;top:379.05px;font-size:10px;line-height:10px;letter-spacing:-0.38px;color:#000;font-weight:normal;white-space:nowrap;text-rendering:geometricPrecision">FileLinks</div>
<svg style="position:absolute;left:39px;top:393px" width="8" height="8" viewBox="0 0 8 8"><rect x="0.5" y="0.5" width="7" height="7" fill="#fff" stroke="#a4a4a4"/><rect x="2" y="3" width="4" height="1" fill="#333"/><rect x="3" y="2" width="1" height="4" fill="#000"/><rect x="2" y="3" width="4" height="1" fill="#000"/></svg>
<svg style="position:absolute;left:52px;top:390px" width="13" height="13" viewBox="0 0 13 13"><defs><linearGradient id="fg" x1="0" y1="0" x2="0" y2="1"><stop offset="0" stop-color="#fde9a4"/><stop offset="1" stop-color="#f1cd7e"/></linearGradient></defs><path d="M6.5 0.5 H11.3 L12 1.2 V4 H6.5 Z" fill="#fbefcc" stroke="#d8b46a" stroke-width="0.8"/><rect x="9.2" y="1.2" width="1.8" height="1.3" fill="#6aa0d0"/><path d="M0.5 1.5 H6.3 Q6.8 3.5 8 3.5 H12 V11.5 H0.5 Z" fill="url(#fg)" stroke="#dcb668" stroke-width="0.9"/><rect x="0.5" y="10.8" width="11.5" height="0.9" fill="#c39a4a"/></svg>
<div style="position:absolute;left:69.5px;top:392.97px;font-size:10px;line-height:10px;letter-spacing:-0.38px;color:#000;font-weight:normal;white-space:nowrap;text-rendering:geometricPrecision">Password Settings Con</div>
<svg style="position:absolute;left:39px;top:407px" width="8" height="8" viewBox="0 0 8 8"><rect x="0.5" y="0.5" width="7" height="7" fill="#fff" stroke="#a4a4a4"/><rect x="2" y="3" width="4" height="1" fill="#333"/><rect x="3" y="2" width="1" height="4" fill="#000"/><rect x="2" y="3" width="4" height="1" fill="#000"/></svg>
<svg style="position:absolute;left:52px;top:404px" width="13" height="13" viewBox="0 0 13 13"><defs><linearGradient id="fg" x1="0" y1="0" x2="0" y2="1"><stop offset="0" stop-color="#fde9a4"/><stop offset="1" stop-color="#f1cd7e"/></linearGradient></defs><path d="M6.5 0.5 H11.3 L12 1.2 V4 H6.5 Z" fill="#fbefcc" stroke="#d8b46a" stroke-width="0.8"/><rect x="9.2" y="1.2" width="1.8" height="1.3" fill="#6aa0d0"/><path d="M0.5 1.5 H6.3 Q6.8 3.5 8 3.5 H12 V11.5 H0.5 Z" fill="url(#fg)" stroke="#dcb668" stroke-width="0.9"/><rect x="0.5" y="10.8" width="11.5" height="0.9" fill="#c39a4a"/></svg>
<div style="position:absolute;left:69.5px;top:406.91px;font-size:10px;line-height:10px;letter-spacing:-0.38px;color:#000;font-weight:normal;white-space:nowrap;text-rendering:geometricPrecision">PSPs</div>
<svg style="position:absolute;left:39px;top:421px" width="8" height="8" viewBox="0 0 8 8"><rect x="0.5" y="0.5" width="7" height="7" fill="#fff" stroke="#a4a4a4"/><rect x="2" y="3" width="4" height="1" fill="#333"/><rect x="3" y="2" width="1" height="4" fill="#000"/><rect x="2" y="3" width="4" height="1" fill="#000"/></svg>
<svg style="position:absolute;left:52px;top:418px" width="13" height="13" viewBox="0 0 13 13"><path d="M0.5 0.5 H9.5 L12.5 3.5 V12.5 H0.5 Z" fill="#fff" stroke="#a0a4a8"/><path d="M9.5 0.5 V3.5 H12.5" fill="#e8e8e8" stroke="#a0a4a8" stroke-width="0.8"/><path d="M6.5 3 V5.5 M3 5.5 H10 M3 5.5 V8.5 M6.5 5.5 V8.5 M10 5.5 V8.5 M2 9.5 L3 8.5 L4 9.5 M5.5 9.5 L6.5 8.5 L7.5 9.5 M9 9.5 L10 8.5 L11 9.5" fill="none" stroke="#5a78a8" stroke-width="0.8"/><rect x="5.5" y="2.5" width="2" height="1.2" fill="#5a78a8"/></svg>
<div style="position:absolute;left:69.5px;top:420.83px;font-size:10px;line-height:10px;letter-spacing:-0.38px;color:#000;font-weight:normal;white-space:nowrap;text-rendering:geometricPrecision">RpcServices</div>
<svg style="position:absolute;left:35px;top:432px" width="13" height="13" viewBox="0 0 13 13"><defs><linearGradient id="fg" x1="0" y1="0" x2="0" y2="1"><stop offset="0" stop-color="#fde9a4"/><stop offset="1" stop-color="#f1cd7e"/></linearGradient></defs><path d="M6.5 0.5 H11.3 L12 1.2 V4 H6.5 Z" fill="#fbefcc" stroke="#d8b46a" stroke-width="0.8"/><rect x="9.2" y="1.2" width="1.8" height="1.3" fill="#6aa0d0"/><path d="M0.5 1.5 H6.3 Q6.8 3.5 8 3.5 H12 V11.5 H0.5 Z" fill="url(#fg)" stroke="#dcb668" stroke-width="0.9"/><rect x="0.5" y="10.8" width="11.5" height="0.9" fill="#c39a4a"/></svg>
<div style="position:absolute;left:53.0px;top:434.77px;font-size:10px;line-height:10px;letter-spacing:-0.38px;color:#000;font-weight:normal;white-space:nowrap;text-rendering:geometricPrecision">Users</div>
<svg style="position:absolute;left:22px;top:449px" width="8" height="8" viewBox="0 0 8 8"><rect x="0.5" y="0.5" width="7" height="7" fill="#fff" stroke="#a4a4a4"/><rect x="2" y="3" width="4" height="1" fill="#333"/><rect x="3" y="2" width="1" height="4" fill="#000"/><rect x="2" y="3" width="4" height="1" fill="#000"/></svg>
<svg style="position:absolute;left:35px;top:446px" width="13" height="13" viewBox="0 0 13 13"><defs><linearGradient id="fg" x1="0" y1="0" x2="0" y2="1"><stop offset="0" stop-color="#fde9a4"/><stop offset="1" stop-color="#f1cd7e"/></linearGradient></defs><path d="M6.5 0.5 H11.3 L12 1.2 V4 H6.5 Z" fill="#fbefcc" stroke="#d8b46a" stroke-width="0.8"/><rect x="9.2" y="1.2" width="1.8" height="1.3" fill="#6aa0d0"/><path d="M0.5 1.5 H6.3 Q6.8 3.5 8 3.5 H12 V11.5 H0.5 Z" fill="url(#fg)" stroke="#dcb668" stroke-width="0.9"/><rect x="0.5" y="10.8" width="11.5" height="0.9" fill="#c39a4a"/></svg>
<div style="position:absolute;left:53.0px;top:448.69px;font-size:10px;line-height:10px;letter-spacing:-0.38px;color:#000;font-weight:normal;white-space:nowrap;text-rendering:geometricPrecision">NTDS Quotas</div>
</div>
<div style="position:absolute;left:199px;top:106px;width:327px;height:15px;background:#d4d0c8"></div>
<svg style="position:absolute;left:185px;top:93px" width="14" height="12" viewBox="0 0 14 12"><defs><linearGradient id="scr" x1="0" y1="0" x2="0.3" y2="1"><stop offset="0" stop-color="#e0ecff"/><stop offset="0.6" stop-color="#80a8f0"/><stop offset="1" stop-color="#2050e0"/></linearGradient></defs><rect x="0.5" y="3.5" width="3.5" height="8" rx="1" fill="#c4c4c4" stroke="#8c8c8c" stroke-width="0.8"/><rect x="1.3" y="5" width="1.5" height="2.5" fill="#60c060"/><rect x="3.5" y="0.5" width="10" height="8.5" fill="#dcdcdc" stroke="#b0b0b0"/><rect x="4.5" y="1.5" width="8" height="6.5" fill="#0818c8"/><path d="M7.5 1.5 Q7 5 8.5 6.5 L12.5 6.5 V1.5 Z" fill="url(#scr)"/><rect x="4.5" y="6.8" width="8" height="1.2" fill="#0010a0"/><rect x="7" y="9" width="3" height="1.5" fill="#a8a8a8"/><rect x="5.5" y="10.5" width="6" height="1" fill="#c8c8c8"/></svg>
<div style="position:absolute;left:200.8px;top:96.03px;font-size:10px;line-height:10px;letter-spacing:-0.95px;color:#000;font-weight:normal;white-space:nowrap;text-rendering:geometricPrecision">TEST-PC</div>
<div style="position:absolute;left:314px;top:96.03px;font-size:10px;line-height:10px;letter-spacing:-0.49px;color:#000;font-weight:normal;white-space:nowrap;text-rendering:geometricPrecision">Computer</div>
<svg style="position:absolute;left:185px;top:108px" width="14" height="12" viewBox="0 0 14 12"><defs><linearGradient id="scr" x1="0" y1="0" x2="0.3" y2="1"><stop offset="0" stop-color="#e0ecff"/><stop offset="0.6" stop-color="#80a8f0"/><stop offset="1" stop-color="#2050e0"/></linearGradient></defs><rect x="0.5" y="3.5" width="3.5" height="8" rx="1" fill="#c4c4c4" stroke="#8c8c8c" stroke-width="0.8"/><rect x="1.3" y="5" width="1.5" height="2.5" fill="#60c060"/><rect x="3.5" y="0.5" width="10" height="8.5" fill="#dcdcdc" stroke="#b0b0b0"/><rect x="4.5" y="1.5" width="8" height="6.5" fill="#0818c8"/><path d="M7.5 1.5 Q7 5 8.5 6.5 L12.5 6.5 V1.5 Z" fill="url(#scr)"/><rect x="4.5" y="6.8" width="8" height="1.2" fill="#0010a0"/><rect x="7" y="9" width="3" height="1.5" fill="#a8a8a8"/><rect x="5.5" y="10.5" width="6" height="1" fill="#c8c8c8"/></svg>
<div style="position:absolute;left:200.8px;top:111.03px;font-size:10px;line-height:10px;letter-spacing:-0.4px;color:#000;font-weight:normal;white-space:nowrap;text-rendering:geometricPrecision">usg110</div>
<div style="position:absolute;left:314px;top:111.03px;font-size:10px;line-height:10px;letter-spacing:-0.49px;color:#000;font-weight:normal;white-space:nowrap;text-rendering:geometricPrecision">Computer</div>
<svg style="position:absolute;left:185px;top:123px" width="14" height="12" viewBox="0 0 14 12"><defs><linearGradient id="scr" x1="0" y1="0" x2="0.3" y2="1"><stop offset="0" stop-color="#e0ecff"/><stop offset="0.6" stop-color="#80a8f0"/><stop offset="1" stop-color="#2050e0"/></linearGradient></defs><rect x="0.5" y="3.5" width="3.5" height="8" rx="1" fill="#c4c4c4" stroke="#8c8c8c" stroke-width="0.8"/><rect x="1.3" y="5" width="1.5" height="2.5" fill="#60c060"/><rect x="3.5" y="0.5" width="10" height="8.5" fill="#dcdcdc" stroke="#b0b0b0"/><rect x="4.5" y="1.5" width="8" height="6.5" fill="#0818c8"/><path d="M7.5 1.5 Q7 5 8.5 6.5 L12.5 6.5 V1.5 Z" fill="url(#scr)"/><rect x="4.5" y="6.8" width="8" height="1.2" fill="#0010a0"/><rect x="7" y="9" width="3" height="1.5" fill="#a8a8a8"/><rect x="5.5" y="10.5" width="6" height="1" fill="#c8c8c8"/></svg>
<div style="position:absolute;left:200.8px;top:125.03px;font-size:10px;line-height:10px;letter-spacing:-0.4px;color:#000;font-weight:normal;white-space:nowrap;text-rendering:geometricPrecision">usg20w-vpn</div>
<div style="position:absolute;left:314px;top:125.03px;font-size:10px;line-height:10px;letter-spacing:-0.49px;color:#000;font-weight:normal;white-space:nowrap;text-rendering:geometricPrecision">Computer</div>
<svg style="position:absolute;left:185px;top:137px" width="14" height="12" viewBox="0 0 14 12"><defs><linearGradient id="scr" x1="0" y1="0" x2="0.3" y2="1"><stop offset="0" stop-color="#e0ecff"/><stop offset="0.6" stop-color="#80a8f0"/><stop offset="1" stop-color="#2050e0"/></linearGradient></defs><rect x="0.5" y="3.5" width="3.5" height="8" rx="1" fill="#c4c4c4" stroke="#8c8c8c" stroke-width="0.8"/><rect x="1.3" y="5" width="1.5" height="2.5" fill="#60c060"/><rect x="3.5" y="0.5" width="10" height="8.5" fill="#dcdcdc" stroke="#b0b0b0"/><rect x="4.5" y="1.5" width="8" height="6.5" fill="#0818c8"/><path d="M7.5 1.5 Q7 5 8.5 6.5 L12.5 6.5 V1.5 Z" fill="url(#scr)"/><rect x="4.5" y="6.8" width="8" height="1.2" fill="#0010a0"/><rect x="7" y="9" width="3" height="1.5" fill="#a8a8a8"/><rect x="5.5" y="10.5" width="6" height="1" fill="#c8c8c8"/></svg>
<div style="position:absolute;left:200.8px;top:140.03px;font-size:10px;line-height:10px;letter-spacing:-0.4px;color:#000;font-weight:normal;white-space:nowrap;text-rendering:geometricPrecision">zywall-110</div>
<div style="position:absolute;left:314px;top:140.03px;font-size:10px;line-height:10px;letter-spacing:-0.49px;color:#000;font-weight:normal;white-space:nowrap;text-rendering:geometricPrecision">Computer</div>
<svg style="position:absolute;left:11px;top:56px" width="15" height="13" viewBox="0 0 15 13"><defs><linearGradient id="ba" x1="0" y1="0" x2="0" y2="1"><stop offset="0" stop-color="#7cc8ff"/><stop offset="0.6" stop-color="#1a8ef0"/><stop offset="1" stop-color="#4aa8f8"/></linearGradient></defs><path d="M0.3 6.3 L6.8 0.3 V3.6 H14 V9.2 H6.8 V12.3 Z" fill="url(#ba)" stroke="#3a90e0" stroke-width="0.6"/></svg>
<svg style="position:absolute;left:31px;top:56px" width="15" height="13" viewBox="0 0 15 13"><defs><linearGradient id="fa" x1="0" y1="0" x2="0" y2="1"><stop offset="0" stop-color="#a8a8a8"/><stop offset="1" stop-color="#747474"/></linearGradient></defs><path d="M14.2 6.3 L7.7 0.3 V3.6 H0.5 V9.2 H7.7 V12.3 Z" fill="url(#fa)" stroke="#6a6a6a" stroke-width="0.6"/></svg>
<div style="position:absolute;left:51px;top:54px;width:1px;height:16px;background:#8c8a86"></div>
<div style="position:absolute;left:52px;top:54px;width:1px;height:16px;background:#fff"></div>
<svg style="position:absolute;left:59px;top:55px" width="13" height="14" viewBox="0 0 13 14"><defs><linearGradient id="ufg" x1="0" y1="0" x2="0" y2="1"><stop offset="0" stop-color="#fde9a4"/><stop offset="1" stop-color="#f1cd7e"/></linearGradient></defs><path d="M6.5 2.5 H11.5 L12 3 V6 H6.5 Z" fill="#fbefcc" stroke="#d8b46a" stroke-width="0.8"/><rect x="9" y="3.2" width="1.8" height="1.2" fill="#7aa8d0"/><path d="M0.5 3.5 H6.3 Q6.8 5.5 8 5.5 H12 V13.5 H0.5 Z" fill="url(#ufg)" stroke="#dcb668" stroke-width="0.9"/><rect x="0.5" y="12.8" width="11.5" height="0.9" fill="#c39a4a"/><path d="M1.8 10.8 Q2.2 7 4.6 5.2 L3.2 4.6 L5.6 1.2 L8.2 4.4 L6.6 4.6 Q5.6 8 2.6 11.2 Z" fill="#50d850" stroke="#28b028" stroke-width="0.6"/></svg>
<div style="position:absolute;left:76px;top:53px;width:19px;height:18px;border-top:1px solid #a09c98;border-left:1px solid #a09c98;border-right:1px solid #fff;border-bottom:1px solid #fff;box-sizing:border-box;background-color:#fff;background-image:linear-gradient(45deg,#d4d0c8 25%,transparent 25%,transparent 75%,#d4d0c8 75%),linear-gradient(45deg,#d4d0c8 25%,transparent 25%,transparent 75%,#d4d0c8 75%);background-size:2px 2px;background-position:0 0,1px 1px"></div>
<svg style="position:absolute;left:79px;top:58px" width="14" height="11" viewBox="0 0 14 11"><rect x="0.5" y="0.5" width="13" height="10" fill="#fff" stroke="#8a8e94"/><rect x="1" y="1" width="12" height="2" fill="#b8c4d0"/><rect x="4" y="3" width="1" height="7" fill="#8a8e94"/><rect x="1.5" y="4" width="2" height="5" fill="#dde8f4"/><rect x="2" y="5" width="1" height="1" fill="#4070c0"/><rect x="2" y="7" width="1" height="1" fill="#4070c0"/><path d="M11 4 L7.5 6.5 L11 9 Z" fill="#40b040"/></svg>
<div style="position:absolute;left:97px;top:54px;width:1px;height:16px;background:#8c8a86"></div>
<div style="position:absolute;left:98px;top:54px;width:1px;height:16px;background:#fff"></div>
<svg style="position:absolute;left:107px;top:55px" width="11" height="14" viewBox="0 0 11 14"><path d="M4.9 0.6 L4.2 7.2" stroke="#8a929c" stroke-width="1.5" stroke-linecap="round"/><path d="M9.6 1.2 L5.6 7.6" stroke="#8a929c" stroke-width="1.5" stroke-linecap="round"/><ellipse cx="2.9" cy="9.8" rx="1.7" ry="2.7" transform="rotate(20 2.9 9.8)" fill="none" stroke="#2a98f0" stroke-width="1.5"/><ellipse cx="6.6" cy="10.8" rx="1.5" ry="2.7" transform="rotate(-8 6.6 10.8)" fill="none" stroke="#2090e8" stroke-width="1.5"/></svg>
<svg style="position:absolute;left:127px;top:56px" width="11" height="12" viewBox="0 0 11 12"><rect x="0.8" y="1.3" width="9.4" height="10.2" rx="0.5" fill="#a06830" stroke="#805020" stroke-width="0.6"/><rect x="2" y="2.5" width="7" height="7.8" fill="#f0f6fc"/><rect x="2" y="4.8" width="7" height="0.9" fill="#98b8d8"/><rect x="2" y="7" width="7" height="0.9" fill="#98b8d8"/><rect x="3" y="0.2" width="5" height="2.6" rx="0.6" fill="#9a9a9a"/></svg>
<div style="position:absolute;left:145px;top:54px;width:1px;height:16px;background:#8c8a86"></div>
<div style="position:absolute;left:146px;top:54px;width:1px;height:16px;background:#fff"></div>
<svg style="position:absolute;left:152px;top:55px" width="14" height="14" viewBox="0 0 14 14"><path d="M2 2 L12 12 M12 2 L2 12" stroke="#e01818" stroke-width="3" stroke-linecap="round"/><path d="M2 2 L12 12 M12 2 L2 12" stroke="#ff5050" stroke-width="1" stroke-linecap="round"/></svg>
<svg style="position:absolute;left:172px;top:55px" width="13" height="14" viewBox="0 0 13 14"><rect x="0.5" y="0.5" width="12" height="13" fill="#fff" stroke="#7c7c7c"/><rect x="1" y="1" width="11" height="2" fill="#c8d0d8"/><rect x="2" y="5" width="3" height="1" fill="#4aa0e0"/><rect x="5" y="5" width="6" height="1" fill="#9aa4b0"/><rect x="2" y="8" width="9" height="1" fill="#9aa4b0"/><rect x="2" y="10" width="9" height="1" fill="#c0c8d0"/><rect x="5" y="12" width="3" height="1.2" fill="#30b0f0"/></svg>
<svg style="position:absolute;left:194px;top:55px" width="11" height="14" viewBox="0 0 11 14"><path d="M0.5 0.5 H8 L10.5 3 V13.5 H0.5 Z" fill="#fafafa" stroke="#9c9c9c"/><circle cx="5.5" cy="8" r="3" fill="none" stroke="#8a8a8a" stroke-width="1.5"/><path d="M6 10.5 L8.5 12 L8 9" fill="#8a8a8a"/></svg>
<svg style="position:absolute;left:212px;top:55px" width="15" height="14" viewBox="0 0 15 14"><path d="M0.5 0.5 H8 L10.5 3 V13.5 H0.5 Z" fill="#fbf6e4" stroke="#a8a8a0"/><rect x="2" y="5" width="1" height="1" fill="#444"/><rect x="4" y="5" width="5" height="1" fill="#7080a0"/><rect x="2" y="8" width="1" height="1" fill="#444"/><rect x="4" y="8" width="4" height="1" fill="#7080a0"/><rect x="2" y="11" width="1" height="1" fill="#888"/><path d="M7 7.5 H10.5 V5 L14.5 9 L10.5 13 V10.5 H7 Z" fill="#40c040" stroke="#28a028" stroke-width="0.5"/></svg>
<div style="position:absolute;left:232px;top:54px;width:1px;height:16px;background:#8c8a86"></div>
<div style="position:absolute;left:233px;top:54px;width:1px;height:16px;background:#fff"></div>
<svg style="position:absolute;left:240px;top:55px" width="12" height="14" viewBox="0 0 12 14"><defs><linearGradient id="hp" x1="0" y1="0" x2="1" y2="1"><stop offset="0" stop-color="#4a78e0"/><stop offset="1" stop-color="#1a3aa8"/></linearGradient></defs><rect x="0.5" y="0.5" width="11" height="13" fill="url(#hp)" stroke="#1a2a80"/><path d="M3.5 4.5 Q3.5 2.5 6 2.5 Q8.5 2.5 8.5 4.5 Q8.5 6 6.5 7 V8.5" fill="none" stroke="#fff" stroke-width="1.6"/><rect x="5.6" y="9.8" width="1.8" height="1.8" fill="#fff"/></svg>
<svg style="position:absolute;left:259px;top:58px" width="14" height="11" viewBox="0 0 14 11"><rect x="0.5" y="0.5" width="13" height="10" fill="#fff" stroke="#8a8e94"/><rect x="1" y="1" width="12" height="2" fill="#b8c4d0"/><rect x="9" y="3" width="1" height="7" fill="#8a8e94"/><rect x="10.5" y="4" width="2" height="5" fill="#dde8f4"/><rect x="11" y="5" width="1" height="1" fill="#4070c0"/><rect x="11" y="7" width="1" height="1" fill="#4070c0"/><path d="M3.5 4 L7 6.5 L3.5 9 Z" fill="#40b040"/></svg>
<div style="position:absolute;left:279px;top:54px;width:1px;height:16px;background:#8c8a86"></div>
<div style="position:absolute;left:280px;top:54px;width:1px;height:16px;background:#fff"></div>
<svg style="position:absolute;left:286px;top:55px" width="14" height="14" viewBox="0 0 14 14"><path d="M2.5 3 l1 -2.5 l1 2.5 l2.5 0.5 l-2 1.5 l0.8 2.5 l-2.3 -1.4 l-2.3 1.4 l0.8 -2.5 l-2 -1.5 z" fill="#f8b020" stroke="#e09010" stroke-width="0.4"/><path d="M4.5 13 Q4.5 8 8.5 8 Q12.5 8 12.5 13 Z" fill="#8ab8e8" stroke="#5080b0" stroke-width="0.5"/><circle cx="8.5" cy="5" r="2.6" fill="#a06a3a" stroke="#503020" stroke-width="0.4"/></svg>
<svg style="position:absolute;left:306px;top:55px" width="15" height="14" viewBox="0 0 15 14"><path d="M2 3 l1 -2.5 l1 2.5 l2.5 0.5 l-2 1.5 l0.8 2.5 l-2.3 -1.4 l-2.3 1.4 l0.8 -2.5 l-2 -1.5 z" fill="#f8b020" stroke="#e09010" stroke-width="0.4"/><path d="M1.5 14 Q1.5 9 5.5 9 Q9.5 9 9.5 14 Z" fill="#7ac070" stroke="#40a040" stroke-width="0.5"/><circle cx="5.5" cy="6" r="2.6" fill="#d0a870" stroke="#503020" stroke-width="0.4"/><path d="M6 15 Q6 10 10 10 Q14 10 14 15 Z" fill="#8ab8e8" stroke="#5080b0" stroke-width="0.5"/><circle cx="10" cy="7" r="2.6" fill="#a06a3a" stroke="#503020" stroke-width="0.4"/></svg>
<svg style="position:absolute;left:326px;top:55px" width="14" height="14" viewBox="0 0 14 14"><circle cx="3" cy="3" r="2.3" fill="none" stroke="#9a9a9a" stroke-width="1.3"/><rect x="2.5" y="4.5" width="11" height="9" fill="#f0f0f0" stroke="#9a9a9a"/><rect x="5" y="7" width="6" height="4" fill="#666"/><rect x="9" y="3.5" width="4" height="2" fill="#dcdcdc" stroke="#999" stroke-width="0.5"/></svg>
<svg style="position:absolute;left:346px;top:56px" width="14" height="13" viewBox="0 0 14 13"><defs><linearGradient id="fl" x1="0" y1="0" x2="1" y2="0"><stop offset="0" stop-color="#6a8aa8"/><stop offset="0.5" stop-color="#c8d8e8"/><stop offset="1" stop-color="#6a8aa8"/></linearGradient></defs><path d="M0.5 0.5 H13.5 L8.5 6.5 V12.5 H5.5 V6.5 Z" fill="url(#fl)" stroke="#5a7898" stroke-width="0.7"/></svg>
<svg style="position:absolute;left:366px;top:55px" width="14" height="14" viewBox="0 0 14 14"><rect x="3.5" y="0.5" width="10" height="13" fill="#d8b030" stroke="#a88010"/><rect x="5" y="2" width="7" height="10" fill="#f0d878"/><circle cx="6.5" cy="7" r="3" fill="#f8f0d0" stroke="#808080" stroke-width="1"/><path d="M4.5 9 L1 12.5" stroke="#909090" stroke-width="1.4"/></svg>
<svg style="position:absolute;left:386px;top:55px" width="15" height="14" viewBox="0 0 15 14"><path d="M2 5 Q2 1 6 1" fill="none" stroke="#2a80e0" stroke-width="1.3"/><path d="M5.5 -0.5 L8 1 L5.5 2.8 Z" fill="#2a80e0"/><path d="M1.5 14 Q1.5 9 5.5 9 Q9.5 9 9.5 14 Z" fill="#7ac070" stroke="#40a040" stroke-width="0.5"/><circle cx="5.5" cy="6" r="2.6" fill="#d0a870" stroke="#503020" stroke-width="0.4"/><path d="M6 15 Q6 10 10 10 Q14 10 14 15 Z" fill="#8ab8e8" stroke="#5080b0" stroke-width="0.5"/><circle cx="10" cy="7" r="2.6" fill="#a06a3a" stroke="#503020" stroke-width="0.4"/></svg>
<div style="position:absolute;left:196px;top:154px;width:407px;height:454px;background:#404040"></div>
<div style="position:absolute;left:196px;top:154px;width:406px;height:453px;background:#dedad4"></div>
<div style="position:absolute;left:197px;top:155px;width:405px;height:452px;background:#808080"></div>
<div style="position:absolute;left:197px;top:155px;width:404px;height:451px;background:#fff"></div>
<div style="position:absolute;left:198px;top:156px;width:403px;height:450px;background:#d4d0c8"></div>
<div style="position:absolute;left:199px;top:157px;width:402px;height:15px;background:linear-gradient(to right,#0a246a,#a6caf0)"></div>
<div style="position:absolute;left:201.3px;top:160.13px;font-size:10px;line-height:10px;letter-spacing:0.15px;color:#fff;font-weight:bold;white-space:nowrap;">usg110 Properties</div>
<div style="position:absolute;left:569px;top:159px;width:14px;height:12px;background:#d4d0c8;box-shadow:inset -1px -1px #404040,inset 1px 1px #fff,inset -2px -2px #808080"></div>
<svg style="position:absolute;left:569px;top:159px" width="14" height="12" viewBox="0 0 14 12"><path d="M4.8 4.2 Q4.8 2.2 7 2.2 Q9.2 2.2 9.2 4 Q9.2 5.2 7.4 6 V7.2" fill="none" stroke="#000" stroke-width="1.9"/><rect x="6.4" y="8.3" width="2" height="2" fill="#000"/></svg>
<div style="position:absolute;left:584px;top:159px;width:14px;height:12px;background:#d4d0c8;box-shadow:inset -1px -1px #404040,inset 1px 1px #fff,inset -2px -2px #808080"></div>
<svg style="position:absolute;left:584px;top:159px" width="14" height="12" viewBox="0 0 14 12"><path d="M3.6 2.2 L10.2 8.8 M10.2 2.2 L3.6 8.8" stroke="#000" stroke-width="1.6"/></svg>
<div style="position:absolute;left:204px;top:213px;width:391px;height:361px;background:#d4d0c8;box-shadow:inset -1px -1px #404040,inset 1px 1px #fff,inset -2px -2px #808080"></div>
<div style="position:absolute;left:206px;top:181px;width:53px;height:17px;background:#d4d0c8;border-top-left-radius:2px;border-top-right-radius:2px;box-shadow:inset 1px 1px #fff,inset -1px 0 #404040,inset -2px 0 #808080"></div>
<div style="position:absolute;left:206px;width:53px;text-align:center;top:186.34px;font-size:10px;line-height:10px;letter-spacing:-0.38px;color:#000;white-space:nowrap;">General</div>
<div style="position:absolute;left:260px;top:181px;width:92px;height:17px;background:#d4d0c8;border-top-left-radius:2px;border-top-right-radius:2px;box-shadow:inset 1px 1px #fff,inset -1px 0 #404040,inset -2px 0 #808080"></div>
<div style="position:absolute;left:260px;width:92px;text-align:center;top:186.34px;font-size:10px;line-height:10px;letter-spacing:-0.38px;color:#000;white-space:nowrap;">Operating System</div>
<div style="position:absolute;left:353px;top:181px;width:65px;height:17px;background:#d4d0c8;border-top-left-radius:2px;border-top-right-radius:2px;box-shadow:inset 1px 1px #fff,inset -1px 0 #404040,inset -2px 0 #808080"></div>
<div style="position:absolute;left:353px;width:65px;text-align:center;top:186.34px;font-size:10px;line-height:10px;letter-spacing:-0.38px;color:#000;white-space:nowrap;">Member Of</div>
<div style="position:absolute;left:419px;top:181px;width:65px;height:17px;background:#d4d0c8;border-top-left-radius:2px;border-top-right-radius:2px;box-shadow:inset 1px 1px #fff,inset -1px 0 #404040,inset -2px 0 #808080"></div>
<div style="position:absolute;left:419px;width:65px;text-align:center;top:186.34px;font-size:10px;line-height:10px;letter-spacing:-0.38px;color:#000;white-space:nowrap;">Delegation</div>
<div style="position:absolute;left:485px;top:181px;width:108px;height:17px;background:#d4d0c8;border-top-left-radius:2px;border-top-right-radius:2px;box-shadow:inset 1px 1px #fff,inset -1px 0 #404040,inset -2px 0 #808080"></div>
<div style="position:absolute;left:485px;width:108px;text-align:center;top:186.34px;font-size:10px;line-height:10px;letter-spacing:-0.38px;color:#000;white-space:nowrap;">Password Replication</div>
<div style="position:absolute;left:206px;top:198px;width:62px;height:16px;background:#d4d0c8;border-top-left-radius:2px;border-top-right-radius:2px;box-shadow:inset 1px 1px #fff,inset -1px 0 #404040,inset -2px 0 #808080"></div>
<div style="position:absolute;left:206px;width:62px;text-align:center;top:201.13px;font-size:10px;line-height:10px;letter-spacing:-0.38px;color:#000;white-space:nowrap;">Location</div>
<div style="position:absolute;left:269px;top:198px;width:76px;height:16px;background:#d4d0c8;border-top-left-radius:2px;border-top-right-radius:2px;box-shadow:inset 1px 1px #fff,inset -1px 0 #404040,inset -2px 0 #808080"></div>
<div style="position:absolute;left:269px;width:76px;text-align:center;top:201.13px;font-size:10px;line-height:10px;letter-spacing:-0.38px;color:#000;white-space:nowrap;">Managed By</div>
<div style="position:absolute;left:401px;top:198px;width:56px;height:16px;background:#d4d0c8;border-top-left-radius:2px;border-top-right-radius:2px;box-shadow:inset 1px 1px #fff,inset -1px 0 #404040,inset -2px 0 #808080"></div>
<div style="position:absolute;left:401px;width:56px;text-align:center;top:201.13px;font-size:10px;line-height:10px;letter-spacing:-0.38px;color:#000;white-space:nowrap;">Security</div>
<div style="position:absolute;left:458px;top:198px;width:51px;height:16px;background:#d4d0c8;border-top-left-radius:2px;border-top-right-radius:2px;box-shadow:inset 1px 1px #fff,inset -1px 0 #404040,inset -2px 0 #808080"></div>
<div style="position:absolute;left:458px;width:51px;text-align:center;top:201.13px;font-size:10px;line-height:10px;letter-spacing:-0.38px;color:#000;white-space:nowrap;">Dial-in</div>
<div style="position:absolute;left:509px;top:198px;width:84px;height:16px;background:#d4d0c8;border-top-left-radius:2px;border-top-right-radius:2px;box-shadow:inset 1px 1px #fff,inset -1px 0 #404040,inset -2px 0 #808080"></div>
<div style="position:absolute;left:509px;width:84px;text-align:center;top:201.13px;font-size:10px;line-height:10px;letter-spacing:-0.38px;color:#000;white-space:nowrap;">Attribute Editor</div>
<div style="position:absolute;left:345px;top:195px;width:55px;height:20px;background:#d4d0c8;border-top-left-radius:2px;border-top-right-radius:2px;box-shadow:inset 1px 1px #fff,inset -1px 0 #404040,inset -2px 0 #808080"></div>
<div style="position:absolute;left:344px;width:56px;text-align:center;top:199.13px;font-size:10px;line-height:10px;letter-spacing:-0.38px;color:#000;white-space:nowrap;">Object</div>
<div style="position:absolute;left:217.1px;top:225.94px;font-size:10px;line-height:10px;letter-spacing:-0.38px;color:#000;font-weight:normal;white-space:nowrap;">Canonical name of object:</div>
<div style="position:absolute;left:217px;top:240px;width:311px;height:20px;background:#d4d0c8;box-shadow:inset 1px 1px #808080,inset -1px -1px #fff,inset 2px 2px #404040,inset -2px -2px #d4d0c8"></div>
<div style="position:absolute;left:220px;top:242px;width:122px;height:12px;background:#0a246a"></div>
<div style="position:absolute;left:220.5px;top:243.53px;font-size:10px;line-height:10px;letter-spacing:-0.38px;color:#fff;font-weight:normal;white-space:nowrap;">USG.com/Computers/usg110</div>
<div style="position:absolute;left:217.3px;top:275.14px;font-size:10px;line-height:10px;letter-spacing:-0.38px;color:#000;font-weight:normal;white-space:nowrap;">Object class:</div>
<div style="position:absolute;left:298.2px;top:275.14px;font-size:10px;line-height:10px;letter-spacing:-0.38px;color:#000;font-weight:normal;white-space:nowrap;">Computer</div>
<div style="position:absolute;left:217.3px;top:296.54px;font-size:10px;line-height:10px;letter-spacing:-0.38px;color:#000;font-weight:normal;white-space:nowrap;">Created:</div>
<div style="position:absolute;left:298.2px;top:296.54px;font-size:10px;line-height:10px;letter-spacing:-0.12px;color:#000;font-weight:normal;white-space:nowrap;">7/25/2017 10:48:20 AM</div>
<div style="position:absolute;left:217.3px;top:317.44px;font-size:10px;line-height:10px;letter-spacing:-0.38px;color:#000;font-weight:normal;white-space:nowrap;">Modified:</div>
<div style="position:absolute;left:298.2px;top:317.44px;font-size:10px;line-height:10px;letter-spacing:-0.12px;color:#000;font-weight:normal;white-space:nowrap;">9/5/2017 11:15:10 AM</div>
<div style="position:absolute;left:217.3px;top:338.64px;font-size:10px;line-height:10px;letter-spacing:-0.38px;color:#000;font-weight:normal;white-space:nowrap;">Update Sequence Numbers (USNs):</div>
<div style="position:absolute;left:230.2px;top:359.94px;font-size:10px;line-height:10px;letter-spacing:-0.38px;color:#000;font-weight:normal;white-space:nowrap;">Current:</div>
<div style="position:absolute;left:298.2px;top:359.94px;font-size:10px;line-height:10px;letter-spacing:-0.38px;color:#000;font-weight:normal;white-space:nowrap;">63700</div>
<div style="position:absolute;left:230.2px;top:380.94px;font-size:10px;line-height:10px;letter-spacing:-0.38px;color:#000;font-weight:normal;white-space:nowrap;">Original:</div>
<div style="position:absolute;left:298.2px;top:380.94px;font-size:10px;line-height:10px;letter-spacing:-0.38px;color:#000;font-weight:normal;white-space:nowrap;">57835</div>
<div style="position:absolute;left:217px;top:412px;width:12px;height:12px;background:#fff;box-shadow:inset 1px 1px #8a8a8a,inset -1px -1px #fff,inset 2px 2px #505050,inset -2px -2px #dcdad6"></div>
<div style="position:absolute;left:233.4px;top:412.54px;font-size:10px;line-height:10px;letter-spacing:-0.38px;color:#000;font-weight:normal;white-space:nowrap;">Protect object from accidental deletion</div>
<div style="position:absolute;left:318px;top:579px;width:66px;height:20px;background:#d4d0c8;box-shadow:inset 1px 1px #000,inset -1px -1px #000,inset 2px 2px #fff,inset -2px -2px #404040,inset -3px -3px #808080"></div>
<div style="position:absolute;left:318px;width:66px;text-align:center;top:583.53px;font-size:10px;line-height:10px;letter-spacing:-0.38px;color:#000;white-space:nowrap;">OK</div>
<div style="position:absolute;left:389px;top:579px;width:65px;height:20px;background:#d4d0c8;box-shadow:inset -1px -1px #404040,inset 1px 1px #fff,inset -2px -2px #808080"></div>
<div style="position:absolute;left:389px;width:65px;text-align:center;top:583.53px;font-size:10px;line-height:10px;letter-spacing:-0.38px;color:#000;white-space:nowrap;">Cancel</div>
<div style="position:absolute;left:459px;top:579px;width:65px;height:20px;background:#d4d0c8;box-shadow:inset -1px -1px #404040,inset 1px 1px #fff,inset -2px -2px #808080"></div>
<div style="position:absolute;left:460px;width:65px;text-align:center;top:584.53px;font-size:10px;line-height:10px;letter-spacing:-0.38px;color:#fff;white-space:nowrap;">Apply</div>
<div style="position:absolute;left:459px;width:65px;text-align:center;top:583.53px;font-size:10px;line-height:10px;letter-spacing:-0.38px;color:#a0a0a0;white-space:nowrap;">Apply</div>
<div style="position:absolute;left:530px;top:579px;width:65px;height:20px;background:#d4d0c8;box-shadow:inset -1px -1px #404040,inset 1px 1px #fff,inset -2px -2px #808080"></div>
<div style="position:absolute;left:530px;width:65px;text-align:center;top:583.53px;font-size:10px;line-height:10px;letter-spacing:-0.38px;color:#000;white-space:nowrap;">Help</div>
<!--DIALOG2-->
</body></html>
